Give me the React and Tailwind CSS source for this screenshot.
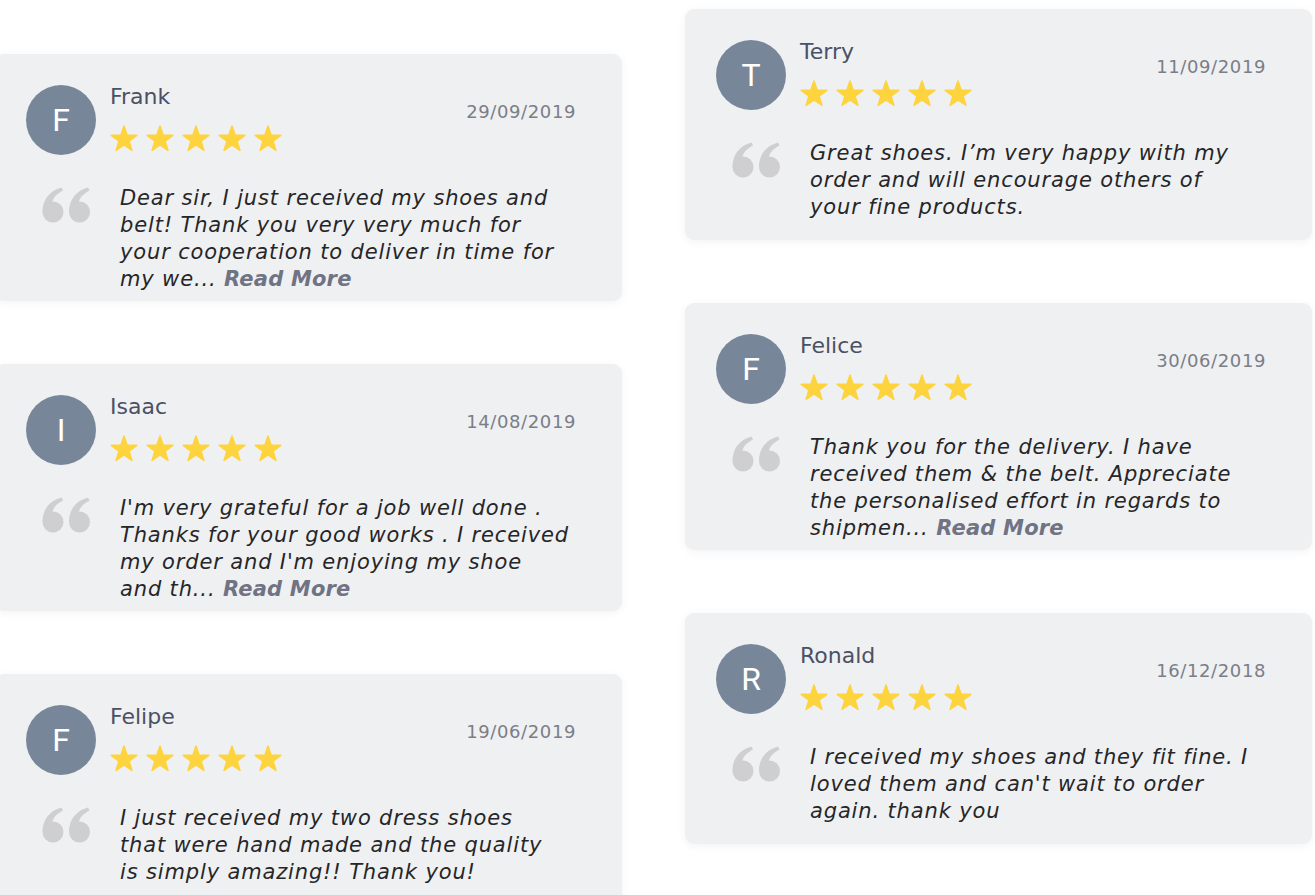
const reviews = {
  left: [
    {
      name: 'Frank',
      date: '29/09/2019',
      lines: ['Dear sir, I just received my shoes and', 'belt! Thank you very very much for', 'your cooperation to deliver in time for', 'my we...'],
      more: true,
    },
    {
      name: 'Isaac',
      date: '14/08/2019',
      lines: ["I'm very grateful for a job well done .", 'Thanks for your good works . I received', "my order and I'm enjoying my shoe", 'and th...'],
      more: true,
    },
    {
      name: 'Felipe',
      date: '19/06/2019',
      lines: ['I just received my two dress shoes', 'that were hand made and the quality', 'is simply amazing!! Thank you!'],
    },
  ],
  right: [
    {
      name: 'Terry',
      date: '11/09/2019',
      lines: ['Great shoes. I’m very happy with my', 'order and will encourage others of', 'your fine products.'],
    },
    {
      name: 'Felice',
      date: '30/06/2019',
      lines: ['Thank you for the delivery. I have', 'received them & the belt. Appreciate', 'the personalised effort in regards to', 'shipmen...'],
      more: true,
    },
    {
      name: 'Ronald',
      date: '16/12/2018',
      lines: ['I received my shoes and they fit fine. I', "loved them and can't wait to order", 'again. thank you'],
    },
  ],
};

function Star() {
  return (
    <svg width="28" height="27" viewBox="0 0 28 27">
      <polygon
        points="14,1 17.18,10.13 26.84,10.33 19.14,16.17 21.94,25.42 14,19.9 6.06,25.42 8.86,16.17 1.16,10.33 10.82,10.13"
        fill="#fdd43e"
        stroke="#fdd43e"
        strokeWidth="1.5"
        strokeLinejoin="round"
      />
    </svg>
  );
}

// two "6" shaped marks, like a heavy opening quote
function QuoteIcon() {
  return (
    <svg width="50" height="36" viewBox="0 0 50 36" fill="#cfcfd1">
      <circle cx="11" cy="25" r="10.5" />
      <path d="M0.5 25 C0.5 13 7 4 19.5 0.5 L21 3.5 C14.5 7 11.5 10.5 10.5 14.5 Z" />
      <circle cx="37.5" cy="25" r="10.5" />
      <path d="M27 25 C27 13 33.5 4 46 0.5 L47.5 3.5 C41 7 38 10.5 37 14.5 Z" />
    </svg>
  );
}

function ReviewCard({ review }) {
  return (
    <div className="bg-[#eff0f2] rounded-[9px] shadow-[0_2px_10px_rgba(0,0,0,0.05)] min-h-[231px] pt-[31px] pl-[31px] pr-[46px] pb-[8px]">
      <div className="flex items-start">
        <div className="w-[70px] h-[70px] rounded-full bg-[#778799] flex items-center justify-center text-white text-[32px] font-['Roboto',sans-serif] shrink-0">
          {review.name[0]}
        </div>
        <div className="ml-[14px] -mt-[3px] flex-1">
          <div className="text-[22px] leading-[30px] text-[#4b5164] font-['DejaVu_Sans',sans-serif]">{review.name}</div>
          <div className="flex gap-[8px] mt-[13px]">
            {[0, 1, 2, 3, 4].map(i => <Star key={i} />)}
          </div>
        </div>
        <div className="mt-[15px] text-[18px] leading-[24px] tracking-[0.6px] text-[#7b7e87] font-['DejaVu_Sans',sans-serif]">
          {review.date}
        </div>
      </div>

      <div className="flex mt-[30px]">
        <div className="ml-[16px] mt-[2px] shrink-0">
          <QuoteIcon />
        </div>
        <p className="ml-[28px] italic text-[21px] leading-[27px] tracking-[0.85px] text-[#262628] font-['DejaVu_Sans',sans-serif] whitespace-nowrap">
          {review.lines.map((l, i) => (
            <span key={i} className="block">
              {l}
              {review.more && i === review.lines.length - 1 && (
                <span className="font-bold tracking-[0.2px] text-[#6f7384]"> Read More</span>
              )}
            </span>
          ))}
        </p>
      </div>
    </div>
  );
}

export default function App() {
  return (
    <div className="bg-white h-[895px] w-[1315px] overflow-hidden">
      <div className="flex gap-[63px] -ml-[5px] items-start">
        <div className="w-[627px] shrink-0 flex flex-col gap-[63px] pt-[54px]">
          {reviews.left.map(r => <ReviewCard key={r.name} review={r} />)}
        </div>
        <div className="w-[627px] shrink-0 flex flex-col gap-[63px] pt-[9px]">
          {reviews.right.map(r => <ReviewCard key={r.name} review={r} />)}
        </div>
      </div>
    </div>
  );
}
